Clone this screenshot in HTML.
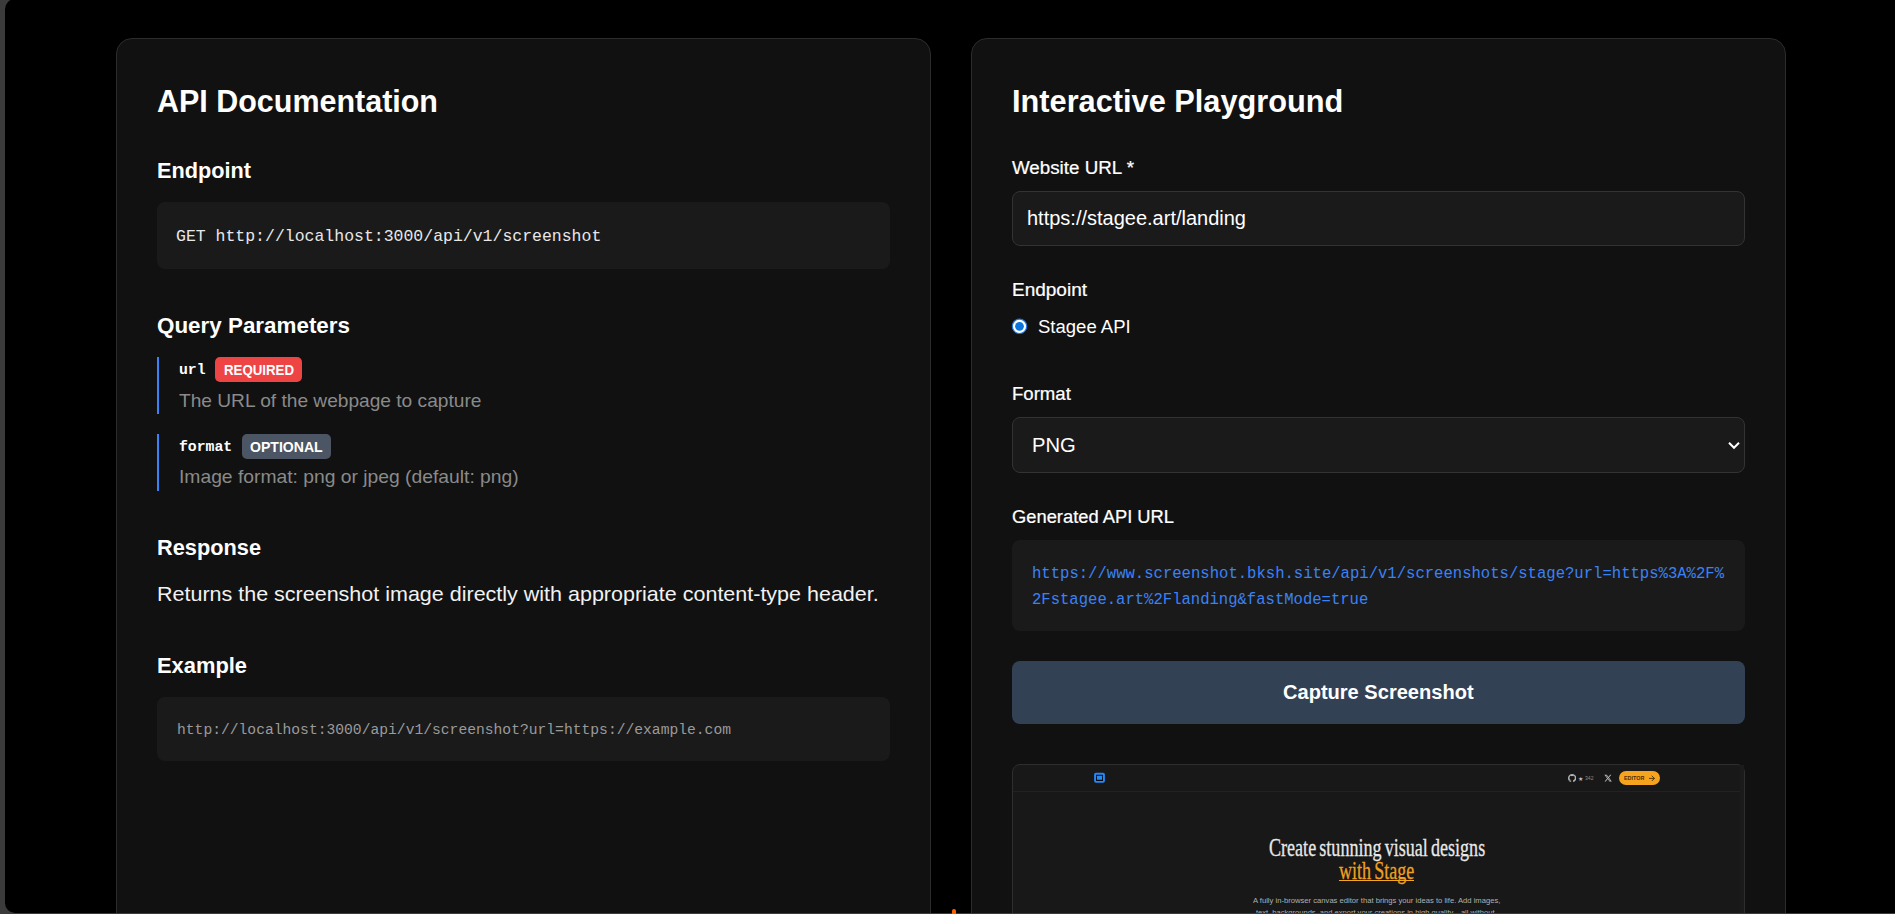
<!DOCTYPE html>
<html lang="en">
<head>
<meta charset="utf-8">
<title>Screenshot API – Documentation &amp; Playground</title>
<style>
html,body{margin:0;padding:0;}
body{width:1895px;height:914px;overflow:hidden;background:#3b3b3b;position:relative;font-family:"Liberation Sans",Arial,sans-serif;}
#page{position:absolute;left:5px;top:-1.5px;width:1900px;height:914.2px;background:#000;border-radius:10px 0 0 10px;overflow:hidden;}
#abs{position:absolute;left:0;top:0;width:1895px;height:912.7px;overflow:hidden;}
.t{position:absolute;white-space:nowrap;display:block;margin:0;padding:0;}
.card{position:absolute;top:38px;width:813px;height:1000px;background:#111;border:1px solid #2c2c2c;border-radius:16px;}
.box{position:absolute;background:#1a1a1a;border-radius:8px;}
.field{position:absolute;background:#1a1a1a;border:1px solid #333;border-radius:8px;box-sizing:border-box;}
.bar{position:absolute;left:157px;width:2px;background:#3b82f6;}
.badge{position:absolute;border-radius:5px;}
.m{-webkit-text-stroke:0.22px currentColor;}
</style>
</head>
<body>
<div id="page"></div>
<div id="abs">
<div class="card" style="left:116px"></div>
<div class="card" style="left:971px"></div>
<div class="box" style="left:157px;top:202px;width:733px;height:67px"></div>
<div class="bar" style="top:357px;height:57px"></div>
<div class="bar" style="top:434px;height:57px"></div>
<div class="badge" style="left:215px;top:357px;width:87px;height:25px;background:#ef4444"></div>
<div class="badge" style="left:242px;top:434px;width:89px;height:25px;background:#4b5563"></div>
<div class="box" style="left:157px;top:697px;width:733px;height:64px"></div>
<div class="field" style="left:1012px;top:191px;width:733px;height:55px"></div>
<svg style="position:absolute;left:1011px;top:318px" width="17" height="17" viewBox="0 0 17 17"><circle cx="8.5" cy="8.3" r="7.2" fill="#fff" stroke="#1a73e8" stroke-width="1.2"/><circle cx="8.5" cy="8.3" r="4.4" fill="#0b74de"/></svg>
<div class="field" style="left:1012px;top:417px;width:733px;height:56px"></div>
<svg style="position:absolute;left:1727px;top:440px" width="14" height="11" viewBox="0 0 14 11"><path d="M2 2.8 L7 7.8 L12 2.8" fill="none" stroke="#fff" stroke-width="2"/></svg>
<div class="box" style="left:1012px;top:540px;width:733px;height:91px"></div>
<div class="box" style="left:1012px;top:661px;width:733px;height:63px;background:#334155"></div>
<div style="position:absolute;left:1012px;top:764px;width:731px;height:200px;background:#181818;border:1px solid #2e2e2e;border-radius:8px"></div>
<div style="position:absolute;left:1740px;top:765px;width:4px;height:160px;background:#1b1b1b"></div>
<div style="position:absolute;left:1013px;top:791px;width:727px;height:1px;background:#222"></div>
<svg style="position:absolute;left:1092px;top:771px" width="15" height="14" viewBox="0 0 15 14"><rect x="2.1" y="1.8" width="10.8" height="10" rx="1.8" fill="#2389f7"/><rect x="4" y="3.7" width="7" height="6.2" rx="0.5" fill="#050a12"/><rect x="4.9" y="4.8" width="5.2" height="4" rx="0.4" fill="#2389f7"/></svg>
<svg style="position:absolute;left:1567.8px;top:773.7px" width="8.3" height="8.3" viewBox="0 0 16 16"><path fill="#b4b4b4" d="M8 0C3.58 0 0 3.58 0 8c0 3.54 2.29 6.53 5.47 7.59.4.07.55-.17.55-.38 0-.19-.01-.82-.01-1.49-2.01.37-2.53-.49-2.69-.94-.09-.23-.48-.94-.82-1.13-.28-.15-.68-.52-.01-.53.63-.01 1.08.58 1.23.82.72 1.21 1.87.87 2.33.66.07-.52.28-.87.51-1.07-1.78-.2-3.64-.89-3.64-3.95 0-.87.31-1.59.82-2.15-.08-.2-.36-1.02.08-2.12 0 0 .67-.21 2.2.82.64-.18 1.32-.27 2-.27.68 0 1.36.09 2 .27 1.53-1.04 2.2-.82 2.2-.82.44 1.1.16 1.92.08 2.12.51.56.82 1.27.82 2.15 0 3.07-1.87 3.75-3.65 3.95.29.25.54.73.54 1.48 0 1.07-.01 1.93-.01 2.2 0 .21.15.46.55.38A8.013 8.013 0 0016 8c0-4.42-3.58-8-8-8z"/></svg>
<svg style="position:absolute;left:1603.6px;top:773.8px" width="8.2" height="8.2" viewBox="0 0 24 24"><path fill="#c8c8c8" d="M18.244 2.25h3.308l-7.227 8.26 8.502 11.24H16.17l-5.214-6.817L4.99 21.75H1.68l7.73-8.835L1.254 2.25H8.08l4.713 6.231zm-1.161 17.52h1.833L7.084 4.126H5.117z"/></svg>
<div style="position:absolute;left:1618.6px;top:770.9px;width:41.4px;height:14.3px;background:#f6a31d;border-radius:7.2px"></div>
<svg style="position:absolute;left:1648.6px;top:774.6px" width="6" height="6.8" viewBox="0 0 6 6.8"><path d="M0.4 3.4 H5.2 M3 1 L5.4 3.4 L3 5.8" fill="none" stroke="#4a2c05" stroke-width="0.9" stroke-linecap="round" stroke-linejoin="round"/></svg>
<div style="position:absolute;left:1339px;top:880px;width:75.3px;height:1px;background:#f5a524"></div>

<h2 class="t" id="h2a" style='left:157.00px;top:85.00px;font:700 32.19px/1 "Liberation Sans", Arial, sans-serif;color:#fff;transform:scaleX(0.9470);transform-origin:0 0;'>API Documentation</h2>
<h3 class="t" id="h3a" style='left:157.00px;top:160.00px;font:700 21.74px/1 "Liberation Sans", Arial, sans-serif;color:#fff;transform:scaleX(0.9983);transform-origin:0 0;'>Endpoint</h3>
<code class="t" id="c1" style='left:176.40px;top:228.00px;font:400 17.00px/1 "Liberation Mono", "DejaVu Sans Mono", monospace;color:#e8e8e8;transform:scaleX(0.9695);transform-origin:0 0;'>GET http://localhost:3000/api/v1/screenshot</code>
<h3 class="t" id="h3b" style='left:157.00px;top:315.00px;font:700 21.74px/1 "Liberation Sans", Arial, sans-serif;color:#fff;transform:scaleX(1.0305);transform-origin:0 0;'>Query Parameters</h3>
<code class="t" id="p1n" style='left:178.50px;top:363.00px;font:700 14.80px/1 "Liberation Mono", "DejaVu Sans Mono", monospace;color:#fff;transform:scaleX(0.9985);transform-origin:0 0;'>url</code>
<span class="t" id="p1b" style='left:223.60px;top:362.00px;font:700 15.00px/1 "Liberation Sans", Arial, sans-serif;color:#fff;transform:scaleX(0.8840);transform-origin:0 0;'>REQUIRED</span>
<p class="t" id="p1d" style='left:179.00px;top:392.00px;font:400 18.60px/1 "Liberation Sans", Arial, sans-serif;color:#8a8a8a;transform:scaleX(1.0289);transform-origin:0 0;'>The URL of the webpage to capture</p>
<code class="t" id="p2n" style='left:178.50px;top:440.00px;font:700 14.80px/1 "Liberation Mono", "DejaVu Sans Mono", monospace;color:#fff;transform:scaleX(0.9985);transform-origin:0 0;'>format</code>
<span class="t" id="p2b" style='left:250.20px;top:439.00px;font:700 15.00px/1 "Liberation Sans", Arial, sans-serif;color:#fff;transform:scaleX(0.9381);transform-origin:0 0;'>OPTIONAL</span>
<p class="t" id="p2d" style='left:179.00px;top:468.00px;font:400 18.60px/1 "Liberation Sans", Arial, sans-serif;color:#8a8a8a;transform:scaleX(1.0368);transform-origin:0 0;'>Image format: png or jpeg (default: png)</p>
<h3 class="t" id="h3c" style='left:157.00px;top:537.00px;font:700 21.74px/1 "Liberation Sans", Arial, sans-serif;color:#fff;transform:scaleX(1.0011);transform-origin:0 0;'>Response</h3>
<p class="t" id="pr" style='left:157.00px;top:584.00px;font:400 20.90px/1 "Liberation Sans", Arial, sans-serif;color:#f2f2f2;transform:scaleX(1.0290);transform-origin:0 0;'>Returns the screenshot image directly with appropriate content-type header.</p>
<h3 class="t" id="h3d" style='left:157.00px;top:655.00px;font:700 21.74px/1 "Liberation Sans", Arial, sans-serif;color:#fff;transform:scaleX(1.0066);transform-origin:0 0;'>Example</h3>
<code class="t" id="c2" style='left:176.80px;top:723.00px;font:400 14.66px/1 "Liberation Mono", "DejaVu Sans Mono", monospace;color:#9a9a9a;transform:scaleX(0.9998);transform-origin:0 0;'>http://localhost:3000/api/v1/screenshot?url=https://example.com</code>
<h2 class="t" id="h2b" style='left:1012.00px;top:85.00px;font:700 32.19px/1 "Liberation Sans", Arial, sans-serif;color:#fff;transform:scaleX(0.9552);transform-origin:0 0;'>Interactive Playground</h2>
<label class="t m" id="l1" style='left:1012.00px;top:159.00px;font:400 18.39px/1 "Liberation Sans", Arial, sans-serif;color:#fff;transform:scaleX(1.0211);transform-origin:0 0;'>Website URL *</label>
<span class="t" id="in" style='left:1027.40px;top:208.00px;font:400 20.00px/1 "Liberation Sans", Arial, sans-serif;color:#fff;transform:scaleX(0.9998);transform-origin:0 0;'>https://stagee.art/landing</span>
<label class="t m" id="l2" style='left:1012.00px;top:281.00px;font:400 18.39px/1 "Liberation Sans", Arial, sans-serif;color:#fff;transform:scaleX(1.0338);transform-origin:0 0;'>Endpoint</label>
<label class="t" id="rl" style='left:1038.20px;top:318.00px;font:400 18.39px/1 "Liberation Sans", Arial, sans-serif;color:#fff;transform:scaleX(1.0081);transform-origin:0 0;'>Stagee API</label>
<label class="t m" id="l3" style='left:1012.00px;top:385.00px;font:400 18.39px/1 "Liberation Sans", Arial, sans-serif;color:#fff;transform:scaleX(1.0103);transform-origin:0 0;'>Format</label>
<span class="t" id="sel" style='left:1032.30px;top:435.00px;font:400 20.80px/1 "Liberation Sans", Arial, sans-serif;color:#fff;transform:scaleX(0.9694);transform-origin:0 0;'>PNG</span>
<label class="t m" id="l4" style='left:1012.00px;top:508.00px;font:400 18.39px/1 "Liberation Sans", Arial, sans-serif;color:#fff;transform:scaleX(0.9975);transform-origin:0 0;'>Generated API URL</label>
<code class="t" id="u1" style='left:1031.50px;top:567.00px;font:400 15.58px/1 "Liberation Mono", "DejaVu Sans Mono", monospace;color:#3b82f6;transform:scaleX(1.0003);transform-origin:0 0;'>https://www.screenshot.bksh.site/api/v1/screenshots/stage?url=https%3A%2F%</code>
<code class="t" id="u2" style='left:1031.50px;top:593.00px;font:400 15.58px/1 "Liberation Mono", "DejaVu Sans Mono", monospace;color:#3b82f6;transform:scaleX(0.9993);transform-origin:0 0;'>2Fstagee.art%2Flanding&amp;fastMode=true</code>
<span class="t" id="btn" style='left:1282.70px;top:682.00px;font:700 20.00px/1 "Liberation Sans", Arial, sans-serif;color:#fff;transform:scaleX(1.0028);transform-origin:0 0;'>Capture Screenshot</span>
<h1 class="t" id="ph1" style='word-spacing:-2px;-webkit-text-stroke:0.3px currentColor;left:1269.00px;top:835.00px;font:400 26.00px/1 "Liberation Serif", "DejaVu Serif", serif;color:#e8e8e8;transform:scaleX(0.6951);transform-origin:0 0;'>Create stunning visual designs</h1>
<h1 class="t" id="ph2" style='word-spacing:-2px;-webkit-text-stroke:0.3px currentColor;left:1339.00px;top:858.00px;font:400 26.00px/1 "Liberation Serif", "DejaVu Serif", serif;color:#f0a020;transform:scaleX(0.6940);transform-origin:0 0;'>with Stage</h1>
<p class="t" id="pp1" style='left:1253.00px;top:897.00px;font:400 7.60px/1 "Liberation Sans", Arial, sans-serif;color:#b0b0b0;transform:scaleX(1.0054);transform-origin:0 0;'>A fully in-browser canvas editor that brings your ideas to life. Add images,</p>
<p class="t" id="pp2" style='left:1256.00px;top:909.00px;font:400 7.60px/1 "Liberation Sans", Arial, sans-serif;color:#b0b0b0;transform:scaleX(0.9947);transform-origin:0 0;'>text, backgrounds, and export your creations in high quality—all without</p>
<span class="t" id="gs" style='left:1578.30px;top:776.00px;font:400 6.00px/1 "Liberation Sans", Arial, sans-serif;color:#bdbdbd;'>★</span>
<span class="t" id="gn" style='left:1584.70px;top:776.00px;font:400 5.40px/1 "Liberation Sans", Arial, sans-serif;color:#8a8a8a;transform:scaleX(0.9444);transform-origin:0 0;'>342</span>
<span class="t" id="ed" style='left:1623.70px;top:776.00px;font:700 5.80px/1 "Liberation Sans", Arial, sans-serif;color:#4a2c05;transform:scaleX(0.9313);transform-origin:0 0;'>EDITOR</span>
</div>
<div style="position:absolute;left:952px;top:908.8px;width:4.2px;height:8px;background:#ff5f00;border-radius:2.1px"></div>
</body>
</html>
